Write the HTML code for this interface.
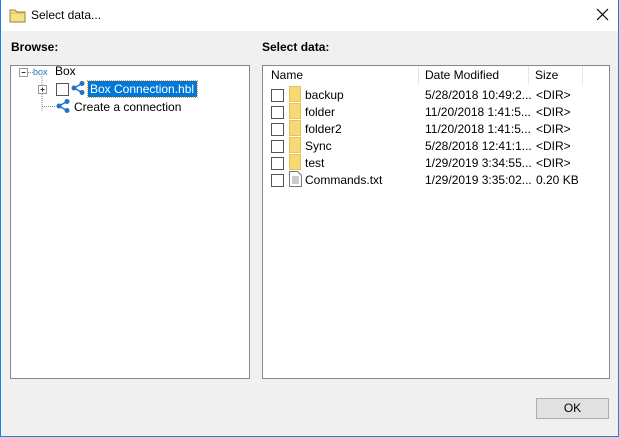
<html><head><style>
body{margin:0;width:619px;height:437px;background:#f0f0f0;font-family:"Liberation Sans",sans-serif;font-size:12px;color:#000;position:relative;overflow:hidden}
.win{position:absolute;left:0;top:0;width:617px;height:436px;border:1px solid #1883d7;border-top:none}
.title{position:absolute;left:0;top:0;width:619px;height:31px;background:#fff}
.abs{position:absolute;white-space:nowrap}
.panel{position:absolute;background:#fff;border:1px solid #828790}
.cb{position:absolute;width:11px;height:11px;border:1px solid #555;background:#fff}
.fold{position:absolute;width:12px;height:16px;background:#f8d775;border:1px solid #e6c060;box-sizing:border-box}
</style></head><body>
<div class="title"></div>
<div class="win"></div>
<svg class="abs" style="left:9px;top:7px" width="18" height="16"><path d="M1 3h5l2 2h8v10H1z" fill="#f5e08a" stroke="#9a8030"/><path d="M1 6h15" stroke="#d9b84a"/></svg>
<div class="abs" style="left:31px;top:8px;font-size:12px">Select data...</div>
<svg class="abs" style="left:596px;top:8px" width="14" height="14"><path d="M1 1L12 12M12 1L1 12" stroke="#000" stroke-width="1.2"/></svg>
<div class="abs" style="left:11px;top:40px;font-weight:bold">Browse:</div>
<div class="abs" style="left:262px;top:40px;font-weight:bold">Select data:</div>
<div class="panel" style="left:10px;top:65px;width:238px;height:312px"></div>
<svg class="abs" style="left:17px;top:66px" width="70" height="50">
<rect x="2.5" y="2.5" width="8" height="8" fill="#fff" stroke="#999"/><path d="M4.5 6.5h4" stroke="#333"/>
<path d="M11 6.5h5M25 10v35M25 23.5h3M25 40.5h14" stroke="#888" stroke-dasharray="1 1"/>
<rect x="21.5" y="19.5" width="8" height="8" fill="#fff" stroke="#999"/><path d="M23.5 23.5h4M25.5 21.5v4" stroke="#333"/>
<text x="16" y="9" font-size="9" fill="#2b6fc4" font-family="Liberation Sans">box</text>
</svg>
<div class="abs" style="left:55px;top:64px">Box</div>
<div class="cb" style="left:56px;top:83px"></div>
<svg class="abs" style="left:70px;top:80px" width="16" height="16"><circle cx="12" cy="3.5" r="2.5" fill="#1f74c9"/><circle cx="4" cy="8" r="2.5" fill="#1f74c9"/><circle cx="12" cy="12.5" r="2.5" fill="#1f74c9"/><path d="M12 3.5L4 8L12 12.5" stroke="#1f74c9" stroke-width="1.5" fill="none"/></svg>
<div class="abs" style="left:88px;top:81px;width:107px;height:16px;background:#0078d7;outline:1px dotted #f0a030;color:#fff;padding-left:2px;line-height:16px">Box Connection.hbl</div>
<svg class="abs" style="left:55px;top:98px" width="16" height="16"><circle cx="12" cy="3.5" r="2.5" fill="#1f74c9"/><circle cx="4" cy="8" r="2.5" fill="#1f74c9"/><circle cx="12" cy="12.5" r="2.5" fill="#1f74c9"/><path d="M12 3.5L4 8L12 12.5" stroke="#1f74c9" stroke-width="1.5" fill="none"/></svg>
<div class="abs" style="left:74px;top:100px">Create a connection</div>

<div class="panel" style="left:262px;top:65px;width:346px;height:312px"></div>
<div class="abs" style="left:418px;top:66px;width:1px;height:19px;background:#e5e5e5"></div>
<div class="abs" style="left:528px;top:66px;width:1px;height:19px;background:#e5e5e5"></div>
<div class="abs" style="left:582px;top:66px;width:1px;height:19px;background:#e5e5e5"></div>
<div class="abs" style="left:271px;top:68px">Name</div>
<div class="abs" style="left:425px;top:68px">Date Modified</div>
<div class="abs" style="left:535px;top:68px">Size</div>

<div class="cb" style="left:271px;top:89px"></div><div class="fold" style="left:289px;top:86px"></div><div class="abs" style="left:305px;top:88px">backup</div><div class="abs" style="left:425px;top:88px">5/28/2018 10:49:2...</div><div class="abs" style="left:536px;top:88px">&lt;DIR&gt;</div>
<div class="cb" style="left:271px;top:106px"></div><div class="fold" style="left:289px;top:103px"></div><div class="abs" style="left:305px;top:105px">folder</div><div class="abs" style="left:425px;top:105px">11/20/2018 1:41:5...</div><div class="abs" style="left:536px;top:105px">&lt;DIR&gt;</div>
<div class="cb" style="left:271px;top:123px"></div><div class="fold" style="left:289px;top:120px"></div><div class="abs" style="left:305px;top:122px">folder2</div><div class="abs" style="left:425px;top:122px">11/20/2018 1:41:5...</div><div class="abs" style="left:536px;top:122px">&lt;DIR&gt;</div>
<div class="cb" style="left:271px;top:140px"></div><div class="fold" style="left:289px;top:137px"></div><div class="abs" style="left:305px;top:139px">Sync</div><div class="abs" style="left:425px;top:139px">5/28/2018 12:41:1...</div><div class="abs" style="left:536px;top:139px">&lt;DIR&gt;</div>
<div class="cb" style="left:271px;top:157px"></div><div class="fold" style="left:289px;top:154px"></div><div class="abs" style="left:305px;top:156px">test</div><div class="abs" style="left:425px;top:156px">1/29/2019 3:34:55...</div><div class="abs" style="left:536px;top:156px">&lt;DIR&gt;</div>
<div class="cb" style="left:271px;top:174px"></div>
<svg class="abs" style="left:289px;top:171px" width="13" height="16"><path d="M0.5 0.5h8l4 4v11h-12z" fill="#fff" stroke="#777"/><path d="M3 6h7M3 8h7M3 10h7M3 12h7" stroke="#999"/></svg>
<div class="abs" style="left:305px;top:173px">Commands.txt</div><div class="abs" style="left:425px;top:173px">1/29/2019 3:35:02...</div><div class="abs" style="left:536px;top:173px">0.20 KB</div>

<div class="abs" style="left:536px;top:398px;width:71px;height:19px;background:#e1e1e1;border:1px solid #adadad;text-align:center;line-height:19px">OK</div>
</body></html>
